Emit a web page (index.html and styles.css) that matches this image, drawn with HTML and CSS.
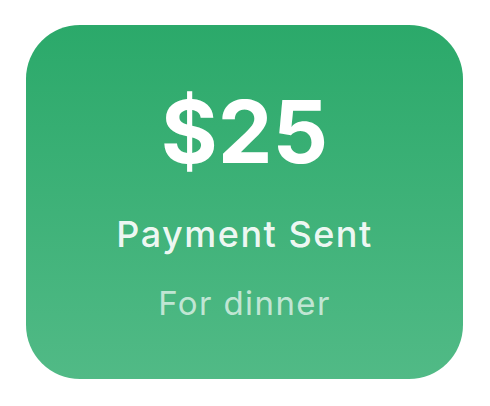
FILE: index.html
```html
<!DOCTYPE html>
<html lang="en">
<head>
  <meta charset="UTF-8">
  <title>Payment Sent</title>
  <link rel="stylesheet" href="styles.css">
</head>
<body>

  <div class="card">
    <div class="amount">$25</div>
    <div class="status">Payment Sent</div>
    <div class="note">For dinner</div>
  </div>

</body>
</html>
```

FILE: styles.css
```css
body {
  margin: 0;
  padding: 25px 0 0 26px;
  background: #ffffff;
  font-family: 'Inter', 'Liberation Sans', sans-serif;
}
.card {
  width: 437px;
  height: 354px;
  box-sizing: border-box;
  padding-top: 63px;
  border-radius: 54px;
  background: linear-gradient(180deg, #2ba96a, #51ba86);
  display: flex;
  flex-direction: column;
  align-items: center;
  color: white;
}
.amount {
  font-size: 87px;
  font-weight: 700;
  line-height: 1;
}
.status {
  margin-top: 41px;
  font-size: 36px;
  font-weight: 500;
  line-height: 1;
  letter-spacing: 1.5px;
  color: rgba(255,255,255,0.93);
}
.note {
  margin-top: 35px;
  font-size: 33px;
  font-weight: 400;
  line-height: 1;
  letter-spacing: 1.4px;
  color: rgba(255,255,255,0.68);
}
```
